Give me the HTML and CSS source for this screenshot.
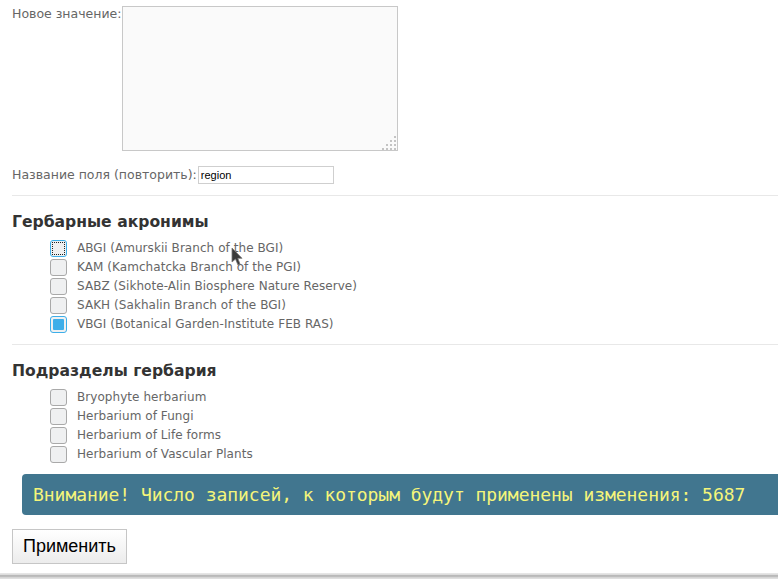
FILE: index.html
```html
<!DOCTYPE html>
<html lang="ru">
<head>
<meta charset="utf-8">
<title>Изменение записей</title>
<link rel="stylesheet" href="styles.css">
</head>
<body>
<div class="page">
  <div class="field field-area">
    <label class="lbl" for="nv">Новое значение:</label>
    <div class="area-wrap">
      <textarea id="nv" class="area"></textarea>
      <svg class="grip" width="14" height="14" viewBox="0 0 14 14">
        <rect x="12" y="0" width="2" height="2"/>
        <rect x="8" y="4" width="2" height="2"/><rect x="12" y="4" width="2" height="2"/>
        <rect x="4" y="8" width="2" height="2"/><rect x="8" y="8" width="2" height="2"/><rect x="12" y="8" width="2" height="2"/>
        <rect x="0" y="12" width="2" height="2"/><rect x="4" y="12" width="2" height="2"/><rect x="8" y="12" width="2" height="2"/><rect x="12" y="12" width="2" height="2"/>
      </svg>
    </div>
  </div>
  <div class="field field-line">
    <label class="lbl" for="fn">Название поля (повторить):</label>
    <input id="fn" class="inp" type="text" value="region">
  </div>
  <hr class="sep">
  <h3 class="heading">Гербарные акронимы</h3>
  <ul class="checks">
    <li><span class="cb cb-focus"></span><span class="txt">ABGI (Amurskii Branch of the BGI)</span></li>
    <li><span class="cb"></span><span class="txt">KAM (Kamchatcka Branch of the PGI)</span></li>
    <li><span class="cb"></span><span class="txt">SABZ (Sikhote-Alin Biosphere Nature Reserve)</span></li>
    <li><span class="cb"></span><span class="txt">SAKH (Sakhalin Branch of the BGI)</span></li>
    <li><span class="cb cb-on"></span><span class="txt">VBGI (Botanical Garden-Institute FEB RAS)</span></li>
  </ul>
  <hr class="sep">
  <h3 class="heading">Подразделы гербария</h3>
  <ul class="checks">
    <li><span class="cb"></span><span class="txt">Bryophyte herbarium</span></li>
    <li><span class="cb"></span><span class="txt">Herbarium of Fungi</span></li>
    <li><span class="cb"></span><span class="txt">Herbarium of Life forms</span></li>
    <li><span class="cb"></span><span class="txt">Herbarium of Vascular Plants</span></li>
  </ul>
  <div class="alert">Внимание! Число записей, к которым будут применены изменения: 5687</div>
  <button class="btn" type="button">Применить</button>
</div>
<div class="bottombar"></div>
<svg class="cursor" width="14" height="20" viewBox="0 0 14 20">
  <path d="M1 1 L1 15 L4.5 12 L7 18 L9 17 L6.8 11.3 L11 11.3 Z" fill="#3a3a3a" stroke="#777" stroke-width="0.8"/>
</svg>
</body>
</html>
```
FILE: styles.css
```css
html, body {
  margin: 0;
  padding: 0;
  background: #fff;
}
body {
  font-family: "DejaVu Sans", Verdana, sans-serif;
  font-size: 12px;
  color: #666;
  position: relative;
  height: 579px;
  overflow: hidden;
}
.page {
  padding: 6px 0 0 12px;
}
.field {
  display: flex;
}
.field-area {
  align-items: flex-start;
}
.field-line {
  align-items: center;
  margin-top: 15px;
}
.lbl {
  font-size: 12.5px;
  line-height: 14px;
  padding-top: 1px;
  color: #666;
}
.field-line .lbl {
  padding-top: 0;
}
.area-wrap {
  position: relative;
  margin-left: 1px;
  height: 145px;
}
.area {
  display: block;
  box-sizing: border-box;
  width: 276px;
  height: 145px;
  margin: 0;
  padding: 2px;
  border: 1px solid #c8c8c8;
  background: #fafafa;
  resize: none;
  font-family: "Liberation Sans", Arial, sans-serif;
  font-size: 12px;
}
.grip {
  position: absolute;
  right: 2px;
  bottom: 1px;
  fill: #c4c4c4;
}
.inp {
  box-sizing: border-box;
  width: 136px;
  height: 18px;
  margin: 0 0 0 1px;
  padding: 0 2px;
  border: 1px solid #cfcfcf;
  background: #fff;
  font-family: "Liberation Sans", Arial, sans-serif;
  font-size: 11px;
  color: #000;
  outline: none;
}
.sep {
  border: 0;
  border-top: 1px solid #e8e8e8;
  margin: 11px 0 0 0;
  height: 0;
}
.heading {
  margin: 17px 0 0 0;
  font-family: "DejaVu Sans", Verdana, sans-serif;
  font-size: 15.6px;
  font-weight: bold;
  line-height: 19px;
  color: #333;
}
.checks {
  list-style: none;
  margin: 8px 0 0 0;
  padding: 0 0 0 38px;
  display: flex;
  flex-direction: column;
  gap: 2px;
}
.checks li {
  display: flex;
  align-items: center;
  height: 17px;
}
.cb {
  box-sizing: border-box;
  width: 17px;
  height: 17px;
  border: 1px solid #a9a9a9;
  border-radius: 3px;
  background: #eff0f1;
  flex: none;
  position: relative;
}
.cb-focus {
  border-color: #3daee9;
}
.cb-focus::after {
  content: "";
  position: absolute;
  inset: 1px;
  border: 1px dotted #222;
}
.cb-on {
  border-color: #3daee9;
}
.cb-on::after {
  content: "";
  position: absolute;
  inset: 2px;
  background: #3daee9;
  border-radius: 1px;
}
.txt {
  margin-left: 10px;
  color: #666;
  line-height: 17px;
  letter-spacing: 0.06px;
}
.alert {
  margin: 11px 0 0 10px;
  height: 41px;
  box-sizing: border-box;
  padding: 0 0 0 11px;
  display: flex;
  align-items: center;
  background: #41768f;
  border-radius: 4px 0 0 4px;
  color: #f5f57a;
  font-family: "DejaVu Sans Mono", monospace;
  font-size: 18px;
  letter-spacing: -0.045px;
  white-space: nowrap;
}
.btn {
  display: block;
  margin-top: 14px;
  width: 115px;
  height: 35px;
  box-sizing: border-box;
  border: 1px solid #c6c6c6;
  background: linear-gradient(#ffffff, #ececec);
  font-family: "Liberation Sans", Arial, sans-serif;
  font-size: 18px;
  color: #000;
  padding: 0;
}
.bottombar {
  margin-top: 9px;
  height: 8px;
  background: linear-gradient(#d9d9d9 0, #f2f2f2 1px, #c8c8c8 2px, #aaa 3px, #d0d0d0 4px, #e4e4e4 6px);
}
.cursor {
  position: absolute;
  left: 231px;
  top: 247px;
}
```
